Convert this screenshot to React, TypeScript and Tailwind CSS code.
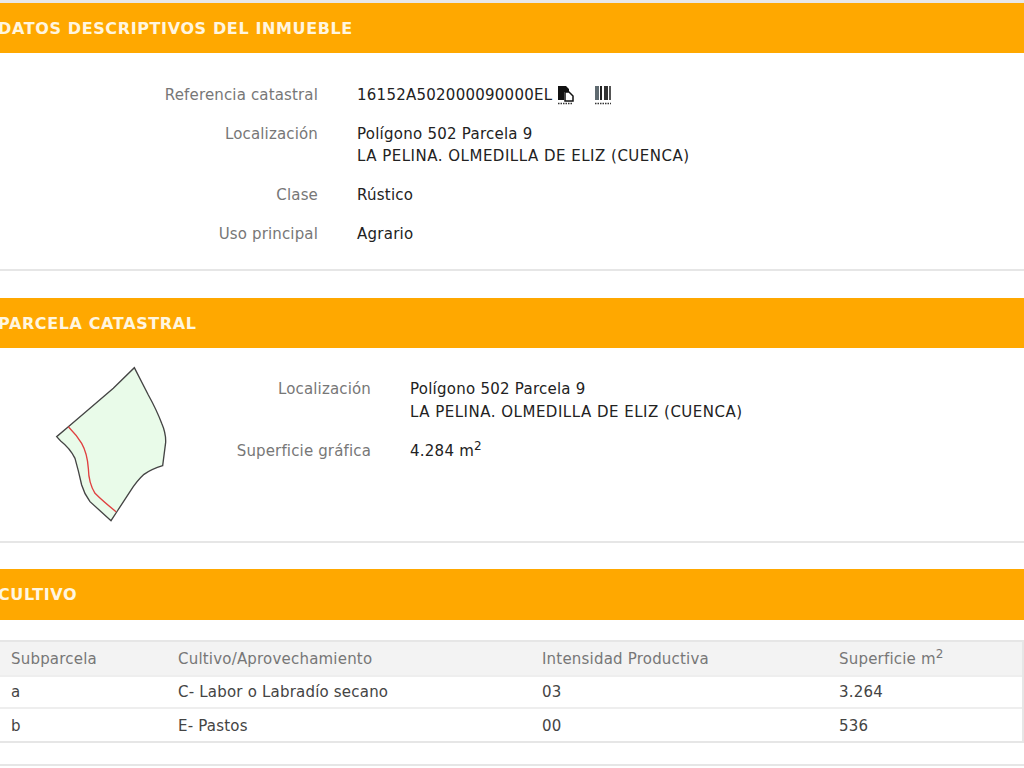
const FONT = "font-['DejaVu_Sans','Liberation_Sans',sans-serif]";

function SectionHeader({ title, tall }: { title: string; tall?: boolean }) {
  return (
    <div className={`${tall ? "h-[51px]" : "h-[50px]"} bg-[#ffa800] flex items-center pt-[1px]`}>
      <h2 className="-ml-[2px] text-[16px] font-bold tracking-[0.62px] text-[#fff6e0]">{title}</h2>
    </div>
  );
}

function Row({ label, labelWidth, children, className }: { label: string; labelWidth: string; children: React.ReactNode; className?: string }) {
  return (
    <div className={`flex ${className ?? ""}`}>
      <div className={`${labelWidth} shrink-0 text-right text-[#777]`}>{label}</div>
      <div className="ml-[39px] text-[#222] tracking-[0.25px]">{children}</div>
    </div>
  );
}

function CopyIcon() {
  return (
    <svg width="18" height="20" viewBox="0 0 18 20" className="ml-[5px]">
      <path d="M1 1h8l3 3v3H7v8H1z" fill="#111" />
      <path d="M8 7h4l4 4v5H8z" fill="#fff" stroke="#111" strokeWidth="1.5" />
      <path d="M1 18.5h15" stroke="#333" strokeWidth="1.5" strokeDasharray="1.5 1" />
    </svg>
  );
}

function BarcodeIcon() {
  return (
    <svg width="18" height="20" viewBox="0 0 18 20" className="ml-[19px]">
      <rect x="1" y="1" width="4" height="14" fill="#5f6a70" />
      <rect x="6" y="1" width="2" height="14" fill="#222" />
      <rect x="10" y="1" width="4" height="14" fill="#333" />
      <rect x="15" y="1" width="2" height="14" fill="#555" />
      <path d="M1 18.5h16" stroke="#333" strokeWidth="1.5" strokeDasharray="1.5 1" />
    </svg>
  );
}

function ParcelMap() {
  return (
    <svg width="140" height="175" viewBox="0 0 420 525" className="shrink-0">
      <path
        d="M283 38 L325 120 Q350 165 365 205 Q378 235 377 262 L368 332 Q335 342 312 358 Q290 378 270 410 L232 468 L213 497 L150 440 Q132 415 125 390 Q115 345 105 310 Q90 280 62 258 L50 245 L85 215 L150 160 L220 100 Z"
        fill="#e9fbe9"
        stroke="#444"
        strokeWidth="4"
      />
      <path d="M85 215 Q110 240 125 265 Q142 295 145 340 Q146 385 165 415 Q190 440 228 470" fill="none" stroke="#e04040" strokeWidth="4" />
    </svg>
  );
}

const cols = "grid grid-cols-[167px_364px_297px_1fr]";

function CultivoTable() {
  return (
    <div className="mt-[20px] border-2 border-[#e6e6e6] border-l-0 tracking-[0.2px]">
      <div className={`${cols} h-[33px] items-center bg-[#f3f3f3] text-[#777] pl-[11px]`}>
        <div>Subparcela</div>
        <div>Cultivo/Aprovechamiento</div>
        <div>Intensidad Productiva</div>
        <div>
          Superficie m<sup className="text-[12px]">2</sup>
        </div>
      </div>
      <div className={`${cols} h-[32px] pb-[1px] items-center border-t-2 border-[#eeeeee] text-[#444] pl-[11px]`}>
        <div>a</div>
        <div>C- Labor o Labradío secano</div>
        <div>03</div>
        <div>3.264</div>
      </div>
      <div className={`${cols} h-[34px] pt-[2px] items-center border-t-2 border-[#eeeeee] text-[#444] pl-[11px]`}>
        <div>b</div>
        <div>E- Pastos</div>
        <div>00</div>
        <div>536</div>
      </div>
    </div>
  );
}

export default function App() {
  return (
    <div className={`${FONT} w-[1024px] h-[768px] overflow-hidden bg-white text-[15px] leading-[22px] tracking-[0.15px]`}>
      <div className="h-[3px] bg-[#e8e8e8]" />
      <SectionHeader title="DATOS DESCRIPTIVOS DEL INMUEBLE" />
      <div className="h-[218px] border-b-2 border-[#e6e6e6] pt-[31px]">
        <Row label="Referencia catastral" labelWidth="w-[318px]">
          <div className="flex items-center">
            16152A502000090000EL
            <CopyIcon />
            <BarcodeIcon />
          </div>
        </Row>
        <Row label="Localización" labelWidth="w-[318px]" className="mt-[17px]">
          Polígono 502 Parcela 9
          <br />
          <span className="tracking-[0.5px]">LA PELINA. OLMEDILLA DE ELIZ (CUENCA)</span>
        </Row>
        <Row label="Clase" labelWidth="w-[318px]" className="mt-[17px]">
          Rústico
        </Row>
        <Row label="Uso principal" labelWidth="w-[318px]" className="mt-[17px]">
          Agrario
        </Row>
      </div>
      <div className="h-[27px]" />
      <SectionHeader title="PARCELA CATASTRAL" />
      <div className="h-[195px] border-b-2 border-[#e6e6e6] flex">
        <div className="ml-[40px] mt-[7px]">
          <ParcelMap />
        </div>
        <div className="pt-[30px] -ml-[180px] leading-[23px]">
          <Row label="Localización" labelWidth="w-[371px]">
            Polígono 502 Parcela 9
            <br />
            <span className="tracking-[0.5px]">LA PELINA. OLMEDILLA DE ELIZ (CUENCA)</span>
          </Row>
          <Row label="Superficie gráfica" labelWidth="w-[371px]" className="mt-[16px]">
            4.284 m<sup className="text-[12px]">2</sup>
          </Row>
        </div>
      </div>
      <div className="h-[26px]" />
      <SectionHeader title="CULTIVO" tall />
      <CultivoTable />
      <div className="mt-[21px] h-[2px] bg-[#e6e6e6]" />
    </div>
  );
}
